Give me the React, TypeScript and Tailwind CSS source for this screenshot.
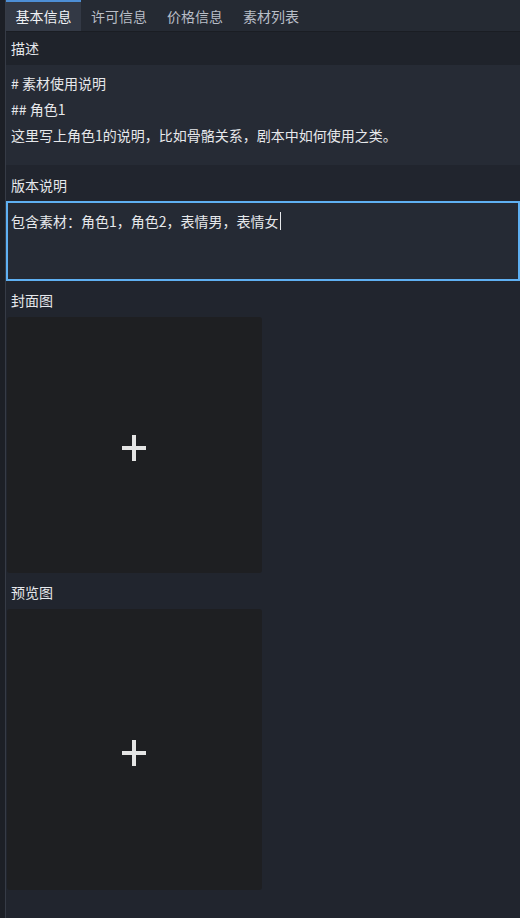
export default function App() {
  const tabs = ["基本信息", "许可信息", "价格信息", "素材列表"];
  return (
    <div
      className="flex h-[918px] w-[520px] bg-[#21252e] text-[14px] text-[#e6e8eb]"
      style={{ fontFamily: '"Noto Sans CJK SC", "Noto Sans", sans-serif' }}
    >
      {/* left gutter */}
      <div className="w-[5px] shrink-0 bg-[#1c1f26]" />
      <div className="w-px shrink-0 bg-[#363b46]" />

      <div className="flex min-w-0 flex-1 flex-col">
        {/* tab bar */}
        <div className="flex h-[32px] shrink-0 border-b border-[#1a1d23] bg-[#252a33]">
          {tabs.map((t, i) => (
            <div
              key={t}
              className={
                i === 0
                  ? "flex w-[75px] items-center justify-center border-t-2 border-[#4d8fd6] bg-[#333945] text-[#f0f2f5]"
                  : "flex w-[76px] items-center justify-center border-t-2 border-transparent text-[#b9bec7]"
              }
            >
              {t}
            </div>
          ))}
        </div>

        {/* 描述 */}
        <div className="flex h-[33px] shrink-0 items-center bg-[#1f232b] px-[5px]">描述</div>
        <div className="flex h-[100px] shrink-0 flex-col bg-[#262b35] px-[5px] pt-[5px] leading-[26px]">
          <div># 素材使用说明</div>
          <div>## 角色1</div>
          <div>这里写上角色1的说明，比如骨骼关系，剧本中如何使用之类。</div>
        </div>

        {/* 版本说明 */}
        <div className="flex h-[36px] shrink-0 items-center px-[5px] pt-[4px]">版本说明</div>
        <div className="h-[80px] shrink-0 border-2 border-[#5fb0f2] bg-[#252a34] px-[3px] pt-[6px] leading-[24px]">
          包含素材：角色1，角色2，表情男，表情女
          <span className="ml-px inline-block h-[18px] w-px translate-y-[3px] bg-[#e6e8eb]" />
        </div>

        {/* 封面图 */}
        <div className="flex h-[36px] shrink-0 items-center px-[5px] pt-[3px]">封面图</div>
        <div className="ml-px flex h-[256px] w-[255px] shrink-0 items-center justify-center rounded-[3px] bg-[#1e1f22]">
          <PlusIcon />
        </div>

        {/* 预览图 */}
        <div className="flex h-[36px] shrink-0 items-center px-[5px] pt-[2px]">预览图</div>
        <div className="ml-px flex h-[281px] w-[255px] shrink-0 items-center justify-center rounded-[3px] bg-[#1e1f22]">
          <PlusIcon />
        </div>
      </div>
    </div>
  );
}

function PlusIcon() {
  return (
    <svg width="24" height="26" viewBox="0 0 24 26" className="-translate-x-px translate-y-[3px]">
      <rect x="10" y="0" width="4" height="26" fill="#e4e4e4" />
      <rect x="0" y="11" width="24" height="4" fill="#e4e4e4" />
    </svg>
  );
}
